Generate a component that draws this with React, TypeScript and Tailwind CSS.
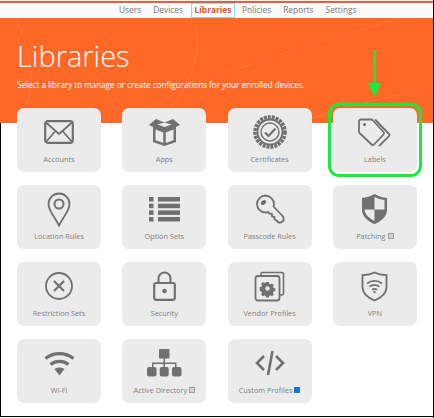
import { FC, ReactNode } from "react";

const Accounts = () => (
  <svg width="30" height="24" viewBox="0 0 30 24" fill="none" stroke="#707070" strokeWidth="2.200">
    <rect x="1.200" y="1.200" width="27.600" height="21.600" rx="2.500" />
    <path d="M2 2.500 15 14 28 2.500M2 22l9-10.500M28 22l-9-10.500" strokeWidth="1.800" />
  </svg>
);

const Apps = () => (
  <svg width="31" height="27" viewBox="0 0 31 27" fill="#707070">
    <path d="M7 0 15.500 3.500 24 0l7 6-4 2v15l-11.500 4L4 23V8L0 6z" />
    <path d="M6.500 10.500l7.800 3v10.500l-7.800-2.700zM24.500 10.500l-7.800 3v10.500l7.800-2.700z" fill="#ebebeb" />
    <path d="M8.500 5.500 15.500 3.500l7 2-7 2.500z" fill="#ebebeb" />
  </svg>
);

const Certificates = () => (
  <svg width="34" height="34" viewBox="0 0 34 34" fill="none" stroke="#707070">
    <circle cx="17" cy="17" r="15" strokeWidth="3.600" strokeDasharray="3 1" />
    <circle cx="17" cy="17" r="12.500" strokeWidth="1.800" />
    <circle cx="17" cy="17" r="9" strokeWidth="1.400" />
    <path d="M12 17.500l3.500 3.500 7-7.500" strokeWidth="2" />
  </svg>
);

const Labels = () => (
  <svg width="33" height="29" viewBox="0 0 33 29" fill="none" stroke="#707070" strokeWidth="1.800" strokeLinejoin="round">
    <path d="M3 1.500h10c1 0 1.500.3 2 1l10.500 11.500c.7.800.7 1.700 0 2.500l-9.500 10c-.7.700-1.700.7-2.400 0L2 15.500c-.6-.6-1-1.300-1-2V3.500c0-1.200.8-2 2-2z" />
    <path d="M17 1.500l14 14.500c.6.700.6 1.500 0 2.100l-10 10" />
    <circle cx="6.500" cy="6.500" r="1.500" fill="#707070" stroke="none" />
  </svg>
);

const Location = () => (
  <svg width="24" height="35" viewBox="0 0 24 35" fill="none" stroke="#707070" strokeWidth="1.800">
    <path d="M12 33.500C8 25 1.500 19 1.500 12a10.500 10.500 0 0 1 21 0c0 7-6.500 13-10.500 21.500z" />
    <circle cx="12" cy="12" r="4.500" strokeWidth="2" />
  </svg>
);

const OptionSets = () => (
  <svg width="31" height="25" viewBox="0 0 31 25" fill="#707070">
    <rect x="0" y="0" width="4.500" height="4.500" />
    <rect x="9" y="0" width="22" height="4.500" />
    <rect x="0" y="6.700" width="4.500" height="4.500" />
    <rect x="9" y="6.700" width="22" height="4.500" />
    <rect x="0" y="13.400" width="4.500" height="4.500" />
    <rect x="9" y="13.400" width="22" height="4.500" />
    <rect x="0" y="20" width="4.500" height="4.500" />
    <rect x="9" y="20" width="22" height="4.500" />
  </svg>
);

const Passcode = () => (
  <svg width="30" height="30" viewBox="0 0 30 30" fill="none" stroke="#707070" strokeWidth="1.800" strokeLinejoin="round">
    <path d="M10 1.500c5 0 9 4 9 8.500 0 1-.2 1.800-.5 2.500L28.500 23v3.500l-2.500 2h-2.500L21 26l-1.500-.5V23l-2.500-.5V20l-2.500-.5-1.500-1.500c-1 .4-1.700.5-2.500.5-5 0-8.500-4-8.500-8.500s4-8.500 8.500-8.500z" />
    <ellipse cx="8.500" cy="8.500" rx="3" ry="2" transform="rotate(-35 8.500 8.500)" fill="#707070" stroke="none" />
  </svg>
);

const Patching = () => (
  <svg width="27" height="32" viewBox="0 0 27 32" fill="none">
    <path d="M13.500 1C9.500 3.500 5.500 4.500 1 5v12c0 6 5.500 11.500 12.500 14C20.500 28.500 26 23 26 17V5c-4.500-.5-8.500-1.500-12.500-4z" fill="#707070" />
    <path d="M13.500 4v12.500H23.500V7c-3.500-.5-7-1.500-10-3zM13.500 16.500H3.500c.4 5 5 9 10 11.500z" fill="#ebebeb" />
  </svg>
);

const Restriction = () => (
  <svg width="28" height="28" viewBox="0 0 28 28" fill="none" stroke="#707070">
    <circle cx="14" cy="14" r="13" strokeWidth="1.800" />
    <path d="M9 9l10 10M19 9 9 19" strokeWidth="2.200" />
  </svg>
);

const Security = () => (
  <svg width="23" height="30" viewBox="0 0 23 30" fill="none">
    <path d="M5.500 12V7.500a6 6 0 0 1 12 0V12" stroke="#707070" strokeWidth="2" />
    <rect x="1.200" y="12" width="20.600" height="16.800" rx="2" stroke="#707070" strokeWidth="2.200" />
    <circle cx="11.500" cy="20" r="2.300" fill="#707070" />
  </svg>
);

const VendorProfiles = () => (
  <svg width="31" height="31" viewBox="0 0 31 31" fill="none" stroke="#707070" strokeWidth="1.600">
    <path d="M7 5V3c0-1 .6-1.500 1.500-1.500h19c1 0 2 .6 2 1.500v19.500c0 1-.8 1.500-1.800 1.500H25" />
    <rect x="1.500" y="5" width="24" height="24.500" rx="2.500" strokeWidth="1.800" />
    <g transform="translate(13.500 17.500)" stroke="none" fill="#707070">
      <path d="M-1.300-6.500h2.600l.4 1.700 1.400.6 1.500-.9 1.800 1.800-.9 1.500.6 1.400 1.700.4v2.600l-1.700.4-.6 1.400.9 1.500-1.800 1.800-1.500-.9-1.400.6-.4 1.700h-2.600l-.4-1.700-1.400-.6-1.500.9-1.800-1.800.9-1.500-.6-1.400-1.700-.4V-1.300l1.700-.4.6-1.400-.9-1.500 1.800-1.800 1.500.9 1.400-.6z" />
      <circle r="2.200" fill="#ebebeb" />
    </g>
  </svg>
);

const Vpn = () => (
  <svg width="27" height="31" viewBox="0 0 27 31" fill="none" stroke="#707070">
    <path d="M13.500 1.500C10 3.300 6 4 1.500 4.200v12C1.500 22 7 27 13.500 29.500 20 27 25.500 22 25.500 16.200v-12C21 4 17 3.300 13.500 1.500z" strokeWidth="1.800" />
    <path d="M6 12.500c4.300-3.500 10.700-3.500 15 0M8.500 15.700c3-2.300 7-2.300 10 0M11 18.700c1.500-1 3.500-1 5 0" strokeWidth="1.700" />
    <circle cx="13.500" cy="21" r="1.200" fill="#707070" stroke="none" />
  </svg>
);

const Wifi = () => (
  <svg width="31" height="25" viewBox="0 0 31 25" fill="none" stroke="#707070" strokeWidth="3.200">
    <path d="M1.500 7.500c8-6.500 20-6.500 28 0" />
    <path d="M6.500 13.500c5.300-4.200 12.700-4.200 18 0" />
    <path d="M15.500 24.500 10.500 18c3-2 7-2 10 0z" fill="#707070" stroke="none" />
  </svg>
);

const ActiveDirectory = () => (
  <svg width="35" height="28" viewBox="0 0 35 28" fill="#707070">
    <rect x="12" y="0" width="10.500" height="9.500" rx="1" />
    <path d="M16.500 9h1.500v4.500h11.500V18H28v-3H18v3h-1.500v-3H6.500v3H5v-4.500h11.500z" />
    <rect x="0" y="18" width="9.500" height="9.500" rx="2" />
    <rect x="12.700" y="18" width="9" height="9.500" rx="2" />
    <rect x="25" y="18" width="9.500" height="9.500" rx="2" />
  </svg>
);

const CustomProfiles = () => (
  <svg width="30" height="26" viewBox="0 0 30 26" fill="none" stroke="#707070" strokeWidth="2.600">
    <path d="M9 6 2 13l7 7M21 6l7 7-7 7" />
    <path d="M17.500 1 13 25" />
  </svg>
);

const SmallBadge = () => <span className="size-[6px] border border-[#9a9a9a] bg-[#d4d4d4]" />;

const WindowsBadge = () => <span className="size-[6px] bg-[#1b76c9]" />;

interface TileProps {
  icon: ReactNode;
  label: string;
  badge?: ReactNode;
  highlighted?: boolean;
}

const Tile: FC<TileProps> = ({ icon, label, badge, highlighted }) => (
  <div className="relative flex h-[64px] w-[84px] flex-col items-center rounded-[7px] bg-[#ebebeb]">
    <div className="flex h-[46px] w-full items-center justify-center pt-[2px]">{icon}</div>
    <span className="flex items-center gap-[2px] whitespace-nowrap text-[7.3px] leading-[10px] text-[#808080]">
      {label}
      {badge}
    </span>
    {highlighted && (
      <div className="absolute -inset-[5px] rounded-[11px] border-[3px] border-[#14ee3a]" />
    )}
  </div>
);

const tiles: TileProps[] = [
  { icon: <Accounts />, label: "Accounts" },
  { icon: <Apps />, label: "Apps" },
  { icon: <Certificates />, label: "Certificates" },
  { icon: <Labels />, label: "Labels", highlighted: true },
  { icon: <Location />, label: "Location Rules" },
  { icon: <OptionSets />, label: "Option Sets" },
  { icon: <Passcode />, label: "Passcode Rules" },
  { icon: <Patching />, label: "Patching", badge: <SmallBadge /> },
  { icon: <Restriction />, label: "Restriction Sets" },
  { icon: <Security />, label: "Security" },
  { icon: <VendorProfiles />, label: "Vendor Profiles" },
  { icon: <Vpn />, label: "VPN" },
  { icon: <Wifi />, label: "Wi-Fi" },
  { icon: <ActiveDirectory />, label: "Active Directory", badge: <SmallBadge /> },
  { icon: <CustomProfiles />, label: "Custom Profiles", badge: <WindowsBadge /> },
];

const App = () => {
  return (
    <div className="h-[418px] w-[434px] overflow-hidden border-r border-black bg-white pt-px font-['Open_Sans',sans-serif]">
      {/* Top nav */}
      <nav className="flex h-[17px] items-center border-t-2 border-[#f0593a] bg-[#fafafa] pl-[119px] text-[8.4px] text-[#777777]">
        <span>Users</span>
        <span className="ml-[12px]">Devices</span>
        <span className="ml-[8px] flex h-[15px] w-[44px] items-center justify-center border border-[#8fdcdc] bg-white font-bold text-[#ef4b24]">
          Libraries
        </span>
        <span className="ml-[7px]">Policies</span>
        <span className="ml-[12px]">Reports</span>
        <span className="ml-[12px]">Settings</span>
      </nav>

      {/* Orange header */}
      <header className="relative h-[105px] overflow-hidden bg-[#fe6827] pl-[17px] pt-[18px] text-white">
        <svg className="absolute inset-0" width="434" height="105" fill="none" stroke="#ff8a4d" strokeWidth="0.700" opacity="0.6">
          <path d="M15 0C30 30 40 70 18 105M195 0c10 40-10 80-40 105M120 105C190 60 300 30 433 -10M433 70C380 80 340 90 300 105" />
        </svg>
        <h1 className="relative text-[29px] font-light leading-[40px]">Libraries</h1>
        <p className="relative mt-[3px] text-[8.1px] leading-[12px]">
          Select a library to manage or create configurations for your enrolled devices.
        </p>
        {/* Annotation arrow */}
        <svg className="absolute left-[367px] top-[32px]" width="16" height="48" viewBox="0 0 16 48" fill="#14ee3a">
          <rect x="6.500" y="0" width="2" height="36" />
          <path d="M1 33h13L7.500 47z" />
        </svg>
      </header>

      {/* Library tiles */}
      <div className="flow-root h-[294px] border-b border-l border-black">
        <main className="relative -mt-[15px] grid grid-cols-[repeat(4,84px)] gap-x-[21.300px] gap-y-[13px] pl-[16px]">
          {tiles.map((tile) => (
            <Tile key={tile.label} {...tile} />
          ))}
        </main>
      </div>
    </div>
  );
};

export default App;
